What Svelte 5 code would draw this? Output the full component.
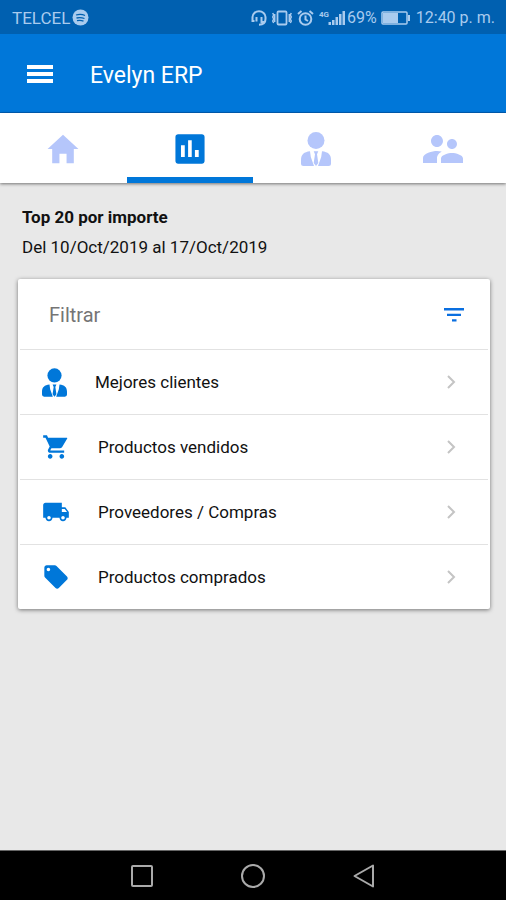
<script>
    let activeTab = "stats";

    const tabs = [
        { id: "home", label: "Inicio" },
        { id: "stats", label: "Estadísticas" },
        { id: "client", label: "Clientes" },
        { id: "people", label: "Contactos" },
    ];

    const reports = [
        { icon: "client", title: "Mejores clientes" },
        { icon: "cart", title: "Productos vendidos" },
        { icon: "truck", title: "Proveedores / Compras" },
        { icon: "tag", title: "Productos comprados" },
    ];
</script>

{#snippet clientIcon()}
    <svg class="client" viewBox="0 0 30 34" aria-hidden="true">
        <circle cx="15" cy="8.5" r="8.5" />
        <path d="M9 19.300C3 20 0 22.500 0 28V31.500Q0 34 2.500 34H13L9.800 25zM21 19.300C27 20 30 22.500 30 28V31.500Q30 34 27.500 34H17L20.200 25z" />
        <path d="M12.700 19.300h4.600l-1.300 3L17.300 31 15 34 12.700 31l1.300-8.700z" />
    </svg>
{/snippet}

<div class="app">
    <div class="status">
        <span class="carrier">TELCEL</span>
        <svg class="spot" width="17" height="17" viewBox="0 0 17 17" aria-hidden="true">
            <circle cx="8.5" cy="8.5" r="8" fill="currentColor" />
            <path d="M4 6q5-1.500 9 .5M4.500 9q4-1 8 .5M5 11.700q3.500-.8 6.500.4" fill="none" stroke="#0060b0" stroke-width="1.300" />
        </svg>
        <span class="spacer"></span>
        <svg width="16" height="18" viewBox="0 0 16 18" fill="none" stroke="currentColor" stroke-width="2" aria-hidden="true">
            <path d="M3.500 12H1.500V8A6.500 5.700 0 0 1 14.500 8V10Q14.500 15.500 8 15.700" />
            <path d="M5.500 8v4.500M10.500 8v5h3" />
        </svg>
        <svg class="vibrate" width="20" height="18" viewBox="0 0 20 18" fill="none" stroke="currentColor" stroke-width="1.800" aria-hidden="true">
            <rect x="5.500" y="2.500" width="9" height="13" rx="1" />
            <path d="M2.700 5v8M17.300 5v8M.7 4l1 2-1 2 1 2-1 2 1 2M19.300 4l-1 2 1 2-1 2 1 2-1 2" stroke-width="1.500" />
        </svg>
        <svg class="alarm" width="17" height="18" viewBox="0 0 17 18" fill="none" stroke="currentColor" stroke-width="2" aria-hidden="true">
            <circle cx="8.500" cy="10" r="5.800" />
            <path d="M8.500 6.500v4l2.500 1.500M1 5l3.500-3M16 5l-3.500-3" />
        </svg>
        <svg class="signal" width="27" height="18" viewBox="0 0 27 18" fill="currentColor" aria-hidden="true">
            <text x="0" y="8" font-size="8" font-weight="700">4G</text>
            <path d="M9.500 13h2.500v3H9.500zM13 11h2.500v5H13zM16.500 8H19v8h-2.500zM20 5h2.500v11H20zM23.500 2H26v14h-2.500z" />
        </svg>
        <span>69%</span>
        <svg class="battery" width="30" height="14" viewBox="0 0 30 14" aria-hidden="true">
            <rect x="1" y="1" width="25" height="12" rx="1" fill="none" stroke="currentColor" stroke-width="1.500" />
            <path d="M2 2h15v10H2zM27 4h2v6h-2z" fill="currentColor" />
        </svg>
        <span>12:40 p. m.</span>
    </div>

    <header>
        <button class="menu" aria-label="Menú">
            <svg width="26" height="18" viewBox="0 0 26 18" aria-hidden="true">
                <path d="M0 0h26v4H0zM0 7h26v4H0zM0 14h26v4H0z" fill="#fff" />
            </svg>
        </button>
        <h1>Evelyn ERP</h1>
    </header>

    <nav class="tabs">
        {#each tabs as tab}
            <button class:active={activeTab === tab.id} aria-label={tab.label} on:click={() => (activeTab = tab.id)}>
                {#if tab.id === "home"}
                    <svg width="38" height="38" viewBox="0 0 512 512" aria-hidden="true">
                        <path d="M208 448V320h96v128h97.600V256H464L256 64 48 256h62.400v192z" />
                    </svg>
                {:else if tab.id === "stats"}
                    <svg width="38" height="38" viewBox="0 0 24 24" aria-hidden="true">
                        <path d="M19.500 2.700h-15c-1 0-1.700.7-1.700 1.700v15.200c0 1 .7 1.700 1.700 1.700h15c1 0 1.700-.7 1.700-1.700V4.400c0-1-.7-1.700-1.700-1.700zM8.700 17H6.300V9.700h2.400zm4.400 0h-2.300V6.500h2.300zm4.400 0h-2.400v-4.400h2.400z" />
                    </svg>
                {:else if tab.id === "client"}
                    {@render clientIcon()}
                {:else}
                    <svg width="48" height="48" viewBox="0 0 24 24" aria-hidden="true">
                        <path d="M16.500 12c1.380 0 2.490-1.120 2.490-2.500S17.880 7 16.500 7 14 8.120 14 9.500s1.120 2.500 2.500 2.500zM9 11c1.660 0 2.990-1.340 2.990-3S10.660 5 9 5 6 6.340 6 8s1.340 3 3 3zm7.500 3c-1.830 0-5.500.92-5.500 2.750V19h11v-2.250c0-1.830-3.670-2.750-5.500-2.750zM9 13c-2.330 0-7 1.170-7 3.500V19h7v-2.250c0-.85.33-2.340 2.370-3.470C10.500 13.100 9.660 13 9 13z" />
                    </svg>
                {/if}
            </button>
        {/each}
    </nav>

    <main>
        <h2>Top 20 por importe</h2>
        <p>Del 10/Oct/2019 al 17/Oct/2019</p>

        <div class="card">
            <button class="filter">
                <span class="title">Filtrar</span>
                <svg width="20" height="14" viewBox="0 0 20 14" aria-hidden="true">
                    <path d="M0 0h20v2.500H0zM3 5.700h14v2.300H3zM8 11.200h4.500v2.300H8z" fill="#0a6fe0" />
                </svg>
            </button>
            {#each reports as report}
                <button class="row">
                    {#if report.icon === "client"}
                        {@render clientIcon()}
                    {:else if report.icon === "cart"}
                        <svg width="28" height="28" viewBox="0 0 24 24" aria-hidden="true">
                            <path d="M7 18c-1.100 0-1.990.9-1.990 2S5.900 22 7 22s2-.9 2-2-.9-2-2-2zM1 2v2h2l3.600 7.590-1.350 2.450c-.16.280-.25.610-.25.960 0 1.100.9 2 2 2h12v-2H7.420c-.14 0-.25-.11-.25-.25l.03-.12.900-1.630h7.450c.75 0 1.410-.41 1.750-1.030L21.500 4.960C22 4 21.500 4 20.900 4H5.210l-.94-2H1zm16 16c-1.100 0-1.990.9-1.990 2s.89 2 1.990 2 2-.9 2-2-.9-2-2-2z" />
                        </svg>
                    {:else if report.icon === "truck"}
                        <svg width="28" height="28" viewBox="0 0 24 24" aria-hidden="true">
                            <path d="M20 8h-3V4H3c-1.100 0-2 .9-2 2v11h2c0 1.660 1.340 3 3 3s3-1.340 3-3h6c0 1.660 1.340 3 3 3s3-1.340 3-3h2v-5l-3-4zM6 18.500c-.83 0-1.500-.67-1.500-1.500s.67-1.500 1.500-1.500 1.500.67 1.500 1.500-.67 1.500-1.500 1.500zm13.500-9l1.960 2.500H17V9.500h2.500zm-1.500 9c-.83 0-1.500-.67-1.500-1.500s.67-1.500 1.500-1.500 1.500.67 1.500 1.500-.67 1.500-1.500 1.500z" />
                        </svg>
                    {:else}
                        <svg width="28" height="28" viewBox="0 0 24 24" aria-hidden="true">
                            <path d="M21.410 11.580l-9-9C12.050 2.220 11.550 2 11 2H4c-1.100 0-2 .9-2 2v7c0 .55.220 1.050.590 1.420l9 9c.36.360.860.580 1.410.580.550 0 1.050-.22 1.410-.590l7-7c.370-.360.590-.860.590-1.410 0-.550-.230-1.060-.590-1.420zM5.500 7C4.670 7 4 6.330 4 5.500S4.670 4 5.500 4 7 4.670 7 5.500 6.330 7 5.500 7z" />
                        </svg>
                    {/if}
                    <span class="title">{report.title}</span>
                    <svg width="9" height="14" viewBox="0 0 9 14" aria-hidden="true">
                        <path d="M1 1l6 6-6 6" fill="none" stroke="#c4c4c4" stroke-width="2" />
                    </svg>
                </button>
            {/each}
        </div>
    </main>

    <div class="softkeys">
        <button aria-label="Recientes">
            <svg width="24" height="24" viewBox="0 0 24 24"><rect x="2" y="2" width="20" height="20" rx="1" /></svg>
        </button>
        <button aria-label="Inicio del sistema">
            <svg width="24" height="24" viewBox="0 0 24 24"><circle cx="12" cy="12" r="11" /></svg>
        </button>
        <button aria-label="Atrás">
            <svg width="24" height="24" viewBox="0 0 24 24"><path d="M21 1.500v21L2.500 12z" stroke-linejoin="round" /></svg>
        </button>
    </div>
</div>

<style>
    :global(body) {
        margin: 0;
    }
    .app {
        display: flex;
        flex-direction: column;
        min-height: 100vh;
        background: #e8e8e8;
        font-family: Roboto, "Liberation Sans", sans-serif;
        color: #111;
    }
    button {
        padding: 0;
        border: 0;
        background: none;
        font: inherit;
        color: inherit;
        cursor: pointer;
    }
    svg {
        display: block;
        flex: none;
    }
    .status {
        display: flex;
        align-items: center;
        height: 34px;
        padding: 1px 11px 0 12px;
        box-sizing: border-box;
        background: #0060b0;
        color: #a9cbee;
        font-size: 16px;
        white-space: nowrap;
    }
    .carrier {
        font-size: 17px;
    }
    .spot {
        margin-left: 2px;
    }
    .spacer {
        flex: 1;
    }
    .vibrate, .alarm, .signal {
        margin-left: 5px;
    }
    .signal {
        margin-right: 1px;
    }
    .battery {
        margin: 0 5px 0 4px;
    }
    header {
        display: flex;
        align-items: center;
        gap: 37px;
        height: 79px;
        padding: 0 27px;
        box-sizing: border-box;
        background: #0077d9;
        border-bottom: 1px solid #0060b8;
        color: #fff;
    }
    h1 {
        margin: 0;
        padding-top: 4px;
        font-size: 23px;
        font-weight: 400;
    }
    .menu {
        padding-top: 2px;
    }
    .tabs {
        display: flex;
        height: 70px;
        background: #fff;
        box-shadow: 0 1px 3px rgba(0, 0, 0, 0.5);
    }
    .tabs button {
        flex: 1;
        display: flex;
        align-items: center;
        justify-content: center;
        padding-top: 8px;
        border-bottom: 6px solid transparent;
        fill: #b5c6fb;
    }
    .tabs button.active {
        border-bottom-color: #0077d9;
        fill: #0077d9;
    }
    .client {
        width: 30px;
        height: 34px;
    }
    main {
        flex: 1;
        padding: 19px 16px 0 18px;
    }
    h2, p {
        margin: 0 4px;
        font-size: 17px;
        line-height: 30px;
    }
    .card {
        margin-top: 17px;
        padding: 0 2px;
        background: #fff;
        border-radius: 2px;
        box-shadow: 0 1px 4px rgba(0, 0, 0, 0.5);
    }
    .filter, .row {
        display: flex;
        align-items: center;
        width: 100%;
        box-sizing: border-box;
        text-align: left;
    }
    .filter {
        height: 70px;
        padding: 2px 24px 0 29px;
        color: #757575;
        font-size: 20px;
    }
    .row {
        gap: 28px;
        height: 65px;
        padding: 0 32px 0 22px;
        border-top: 1px solid #e2e2e2;
        font-size: 17px;
        fill: #0077d9;
    }
    .row .client {
        width: 25px;
        height: 29px;
    }
    .title {
        flex: 1;
    }
    .softkeys {
        display: flex;
        justify-content: center;
        height: 50px;
        background: #000;
        border-top: 1px solid #666;
        box-sizing: border-box;
    }
    .softkeys button {
        display: flex;
        align-items: center;
        justify-content: center;
        width: 22%;
        fill: none;
        stroke: #aaa;
        stroke-width: 2;
    }
</style>
